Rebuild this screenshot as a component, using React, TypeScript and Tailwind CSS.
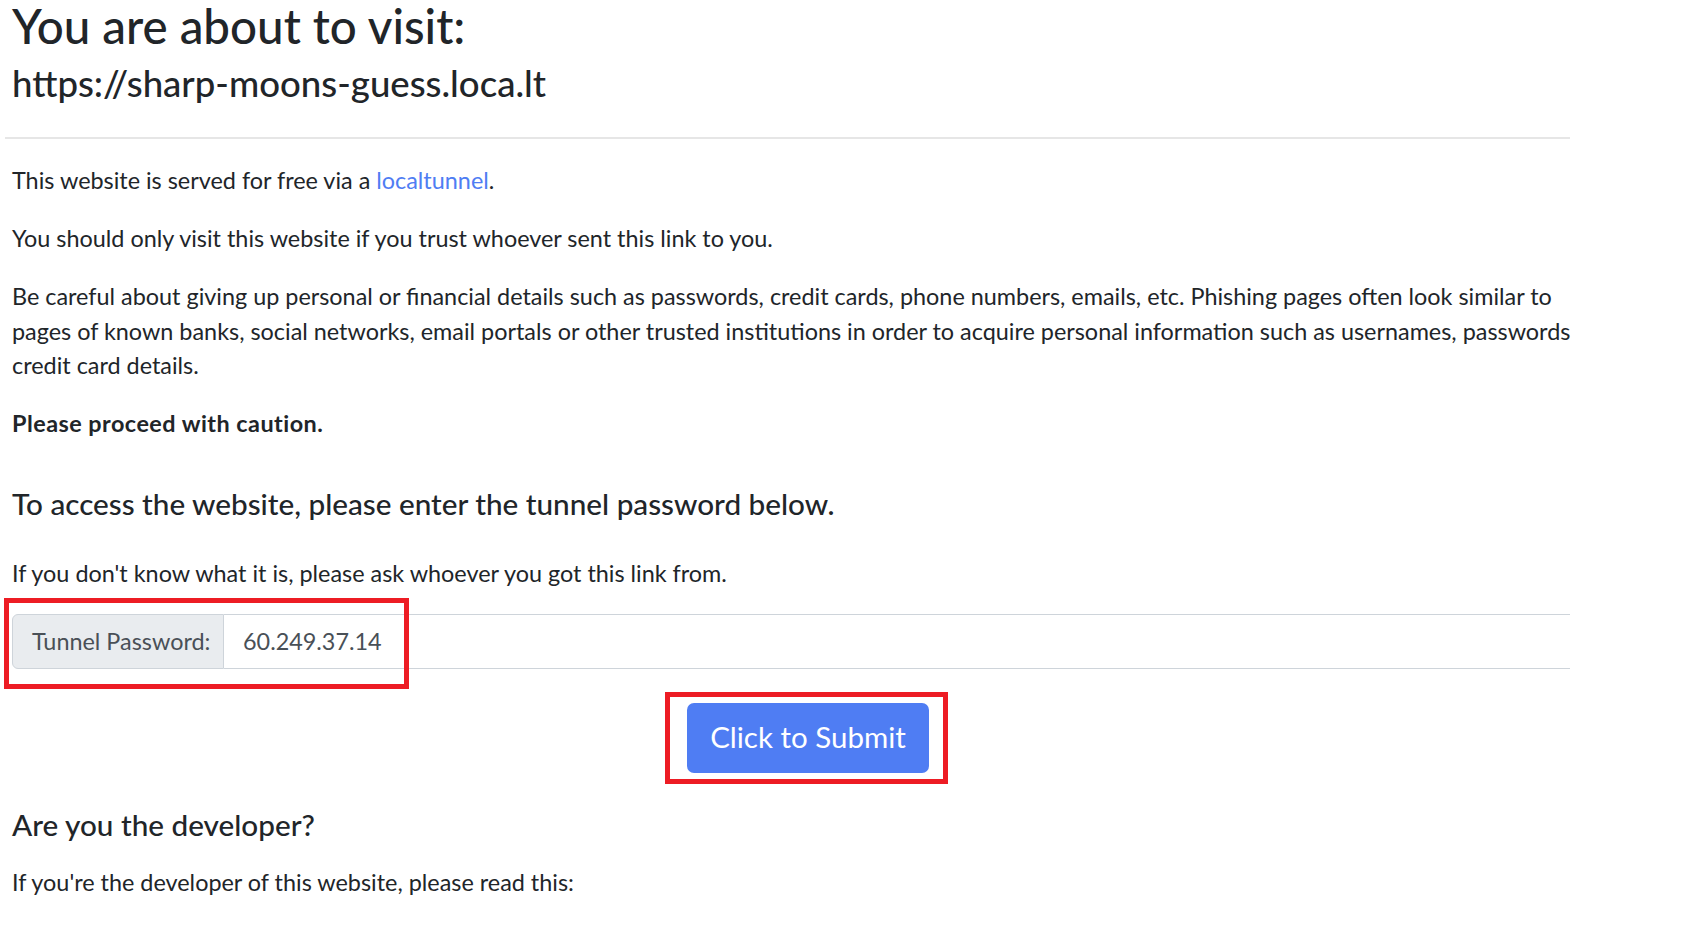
export default function App() {
  return (
    <div className="min-h-screen bg-white font-['Lato',sans-serif] text-[#212529] text-[23.4px] leading-[34.5px]">
      <div className="w-[1565px] ml-[5px]">
        <div className="pl-[7px]">
          <h2 className="pt-[2px] text-[47.5px] font-medium leading-[47px]">You are about to visit:</h2>
          <h3 className="mt-[12px] text-[36.6px] font-medium leading-[44px]">https://sharp-moons-guess.loca.lt</h3>
        </div>
        <hr className="mt-[32px] border-t-2 border-[#e6e6e6]" />

        <div className="pl-[7px]">
          <p className="mt-[24px]">
            This website is served for free via a{" "}
            <a href="#" className="text-[#4f7df3]">localtunnel</a>.
          </p>
          <p className="mt-[23px]">
            You should only visit this website if you trust whoever sent this link to you.
          </p>
          <p className="mt-[24px] whitespace-nowrap">
            Be careful about giving up personal or financial details such as passwords, credit cards, phone numbers, emails, etc. Phishing pages often look similar to
            <br />
            pages of known banks, social networks, email portals or other trusted institutions in order to acquire personal information such as usernames, passwords
            <br />
            credit card details.
          </p>
          <p className="mt-[23px] font-bold tracking-[0.02em]">Please proceed with caution.</p>

          <h5 className="mt-[46px] text-[29.7px] font-medium leading-[35px]">
            To access the website, please enter the tunnel password below.
          </h5>
          <p className="mt-[35px]">If you don't know what it is, please ask whoever you got this link from.</p>

          <div className="relative mt-[23px] flex h-[55px]">
            <div className="flex w-[212px] items-center rounded-l-[6px] border border-[#ced4da] bg-[#e9ecef] pl-[19px] text-[#495057]">
              Tunnel Password:
            </div>
            <div className="flex flex-1 items-center border-y border-[#ced4da] pl-[19px] text-[#495057]">
              60.249.37.14
            </div>
            <div className="pointer-events-none absolute left-[-8px] top-[-16px] h-[91px] w-[405px] border-[5px] border-[#ed1c24]" />
          </div>

          <div className="mt-[34px] flex">
            <div className="relative ml-[675px]">
              <button className="h-[70px] w-[242px] rounded-[7px] bg-[#4f7df3] text-[29.5px] text-white">
                Click to Submit
              </button>
              <div className="pointer-events-none absolute left-[-22px] top-[-11px] h-[92px] w-[283px] border-[5px] border-[#ed1c24]" />
            </div>
          </div>

          <h5 className="mt-[34px] text-[29.7px] font-medium leading-[35px]">Are you the developer?</h5>
          <p className="mt-[23px]">If you're the developer of this website, please read this:</p>
        </div>
      </div>
    </div>
  );
}
